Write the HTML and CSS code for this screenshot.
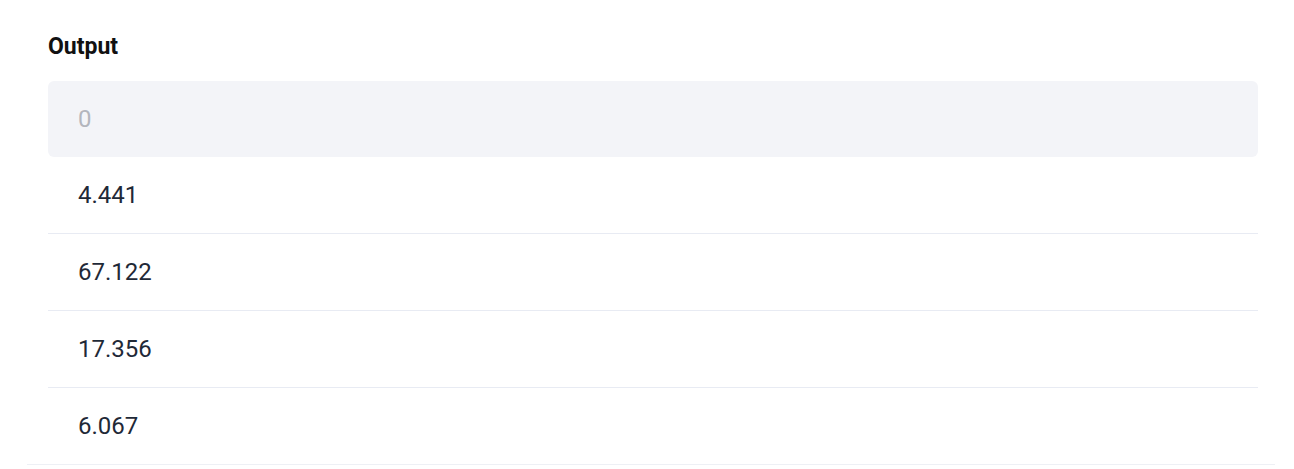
FILE: index.html
```html
<!DOCTYPE html>
<html lang="en">
<head>
  <meta charset="UTF-8">
  <title>Output</title>
  <link rel="stylesheet" href="styles.css">
</head>
<body>
  <div class="panel">
    <div class="output">
      <label class="title" for="output">Output</label>
      <input type="text" id="output" class="field" placeholder="0" readonly>
      <ul class="rows">
        <li>4.441</li>
        <li>67.122</li>
        <li>17.356</li>
        <li>6.067</li>
      </ul>
    </div>
  </div>
</body>
</html>
```

FILE: styles.css
```css
body {
  margin: 0;
  font-family: Roboto, "Noto Sans", Arial, sans-serif;
  background-color: #ffffff;
  color: #1f2937;
}
.panel {
  margin: 0 19px 0 27px;
  border-bottom: 1px solid #eef0f5;
}
.output {
  padding: 33px 17px 0 21px;
}
.title {
  display: block;
  font-size: 23px;
  line-height: 28px;
  font-weight: bold;
  color: #111111;
  margin-bottom: 20px;
}
.field {
  display: block;
  width: 100%;
  height: 76px;
  box-sizing: border-box;
  padding: 0 30px;
  border: none;
  border-radius: 6px;
  background-color: #f3f4f8;
  font-family: inherit;
  font-size: 24px;
  color: #1f2937;
  outline: none;
}
.field::placeholder {
  color: #b3b6bd;
}
.rows {
  list-style: none;
  margin: 0;
  padding: 0;
}
.rows li {
  height: 76px;
  line-height: 76px;
  padding: 0 30px;
  font-size: 24px;
  border-bottom: 1px solid #e8ebf3;
}
.rows li:last-child {
  border-bottom: none;
}
```
